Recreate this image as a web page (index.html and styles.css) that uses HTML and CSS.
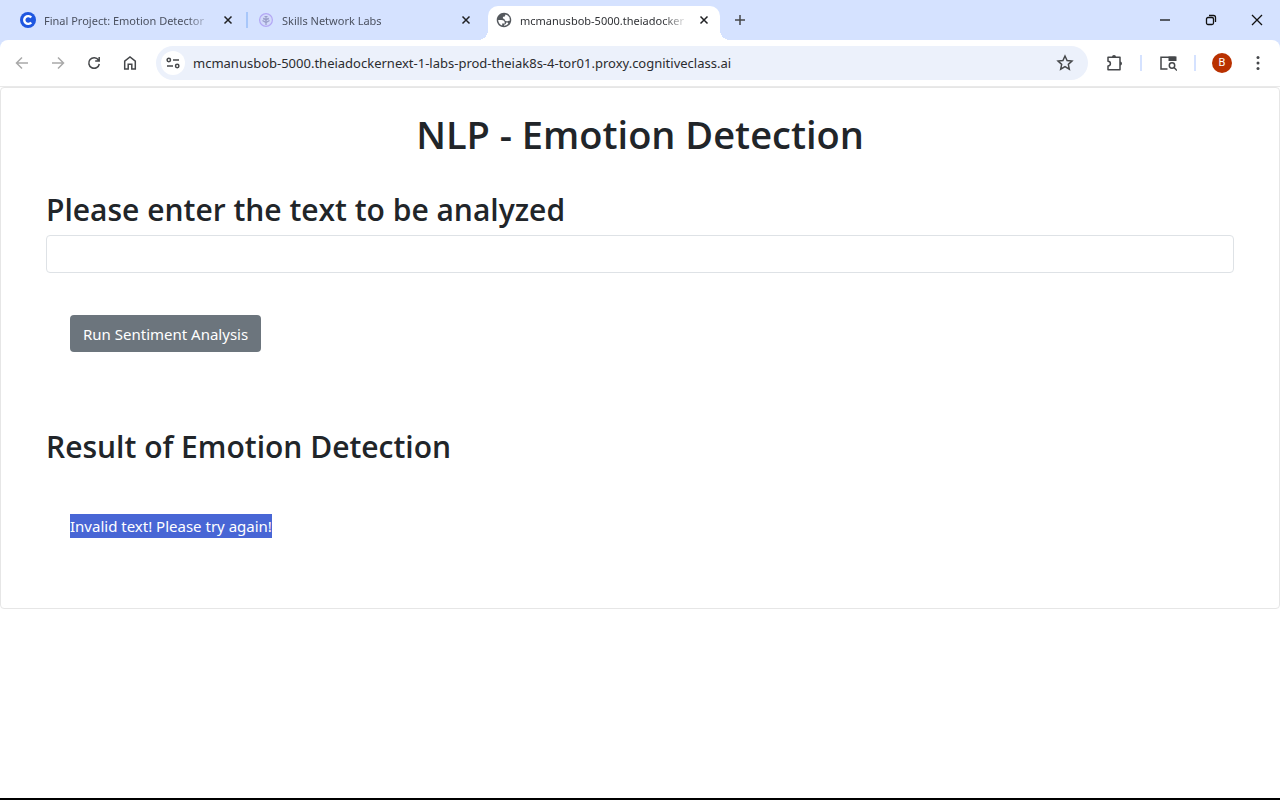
FILE: index.html
```html
<!DOCTYPE html>
<html lang="en">
<head>
<meta charset="utf-8">
<title>NLP - Emotion Detection</title>
<link rel="stylesheet" href="styles.css">
</head>
<body>
<div class="window">
  <header class="chrome">
    <div class="tabstrip">
      <div class="tab">
        <svg class="favicon" viewBox="0 0 16 16" aria-hidden="true"><circle cx="8" cy="8" r="8" fill="#1f57e0"/><path d="M11.2 5.6A3.9 3.9 0 1 0 11.2 10.4" fill="none" stroke="#fff" stroke-width="2.4"/></svg>
        <span class="tab-title">Final Project: Emotion Detector</span>
        <button class="tab-close" aria-label="Close tab"><svg viewBox="0 0 10 10"><path d="M1.5 1.5l7 7M8.5 1.5l-7 7"/></svg></button>
      </div>
      <div class="tab">
        <svg class="favicon" viewBox="0 0 16 16" aria-hidden="true"><circle cx="8" cy="8" r="6.4" fill="#d3dafb" stroke="#b3a8f5" stroke-width="1.2"/><path d="M8 4v9M5.500 6L8 8.500 10.500 6M4.500 8.500L8 10.500l3.500-2M6.500 4.500h3M5 7h6" fill="none" stroke="#989dc8" stroke-width="1.2"/></svg>
        <span class="tab-title">Skills Network Labs</span>
        <button class="tab-close" aria-label="Close tab"><svg viewBox="0 0 10 10"><path d="M1.5 1.5l7 7M8.5 1.5l-7 7"/></svg></button>
      </div>
      <div class="tab tab-active">
        <svg class="favicon" viewBox="1 1 22 22" aria-hidden="true"><path fill="#55595e" d="M12 2C6.480 2 2 6.480 2 12s4.480 10 10 10 10-4.480 10-10S17.520 2 12 2zM4 12h4.400c3.400 0 4.900 1.600 4.600 4.900H9.500v2.600C6.300 18.500 4 15.500 4 12zm8 8v-1.500c2-.3 3-1.300 3-3h1.200c1 0 1.500.5 1.700 1.700A8 8 0 0 1 12 20zm7.900-7h-1.500c-1 .9-3.600 1.300-5.400-.8-.2-1.700-.7-2-2.500-2.200V7.500h1c1.500 0 2-1 2.500-3.200A8 8 0 0 1 19.900 13z"/></svg>
        <span class="tab-title">mcmanusbob-5000.theiadocker</span>
        <button class="tab-close" aria-label="Close tab"><svg viewBox="0 0 10 10"><path d="M1.5 1.5l7 7M8.5 1.5l-7 7"/></svg></button>
      </div>
      <button class="new-tab" aria-label="New tab"><svg viewBox="0 0 12 12"><path d="M6 1v10M1 6h10"/></svg></button>
      <div class="window-controls">
        <button aria-label="Minimize"><svg viewBox="0 0 12 12"><path d="M1 6h10"/></svg></button>
        <button aria-label="Restore"><svg viewBox="0 0 12 12"><rect x="1.500" y="3.500" width="7" height="7" rx="1.500"/><path d="M4 1.500h4.500a2 2 0 0 1 2 2V8"/></svg></button>
        <button aria-label="Close"><svg viewBox="0 0 12 12"><path d="M1 1l10 10M11 1L1 11"/></svg></button>
      </div>
    </div>
    <div class="toolbar">
      <button class="tool disabled" aria-label="Back"><svg viewBox="0 0 16 16"><path d="M14 8H2.500M8 2.500L2.500 8 8 13.500"/></svg></button>
      <button class="tool disabled" aria-label="Forward"><svg viewBox="0 0 16 16"><path d="M2 8h11.500M8 2.500L13.500 8 8 13.500"/></svg></button>
      <button class="tool" aria-label="Reload"><svg viewBox="0 0 16 16"><path d="M12.500 5A5.300 5.300 0 1 0 13.300 9M13.200 2v4H9.200"/></svg></button>
      <button class="tool" aria-label="Home"><svg viewBox="0 0 16 16"><path d="M2.700 6.200L8 2l5.300 4.200V14H9.800V9.300H6.200V14H2.700z"/></svg></button>
      <div class="omnibox">
        <button class="site-info" aria-label="View site information"><svg viewBox="0 0 16 16"><circle cx="3.800" cy="5" r="1.700"/><path d="M8 5h6M2 11h6"/><circle cx="12.200" cy="11" r="1.700"/></svg></button>
        <input class="address" type="text" aria-label="Address" value="mcmanusbob-5000.theiadockernext-1-labs-prod-theiak8s-4-tor01.proxy.cognitiveclass.ai">
        <button class="star" aria-label="Bookmark this tab"><svg viewBox="0 0 16 16"><path d="M8 1.800l1.850 4 4.350.45-3.250 2.950.9 4.300L8 11.300l-3.850 2.200.9-4.300L1.800 6.250l4.350-.45z"/></svg></button>
      </div>
      <button class="tool" aria-label="Extensions"><svg class="wide" viewBox="0 0 18 18"><path d="M3 3.200H15V15.800H3V12a2.300 2.300 0 0 0 0-4.800z" stroke-linejoin="round"/><path d="M7 3a2 2 0 0 1 4 0zM15 7.500a2 2 0 0 1 0 4z" fill="#45474a" stroke="none"/></svg></button>
      <span class="separator"></span>
      <button class="tool" aria-label="Search side panel"><svg class="wide" viewBox="0 0 18 18"><path d="M8.500 15H2V3.300h14.500"/><path d="M9.500 2.500H17.500V7H9.500z" fill="#45474a" stroke="none"/><circle cx="13" cy="11.500" r="2.700"/><path d="M15 13.500l3 3"/></svg></button>
      <span class="separator"></span>
      <button class="tool" aria-label="Profile"><span class="avatar">B</span></button>
      <button class="tool" aria-label="Menu"><svg viewBox="0 0 16 16"><g fill="#45474a" stroke="none"><circle cx="8" cy="2.500" r="1.500"/><circle cx="8" cy="8" r="1.500"/><circle cx="8" cy="13.500" r="1.500"/></g></svg></button>
    </div>
  </header>
  <main class="page">
    <section class="card">
      <h1>NLP - Emotion Detection</h1>
      <div class="group">
        <h2><label for="textToAnalyze">Please enter the text to be analyzed</label></h2>
        <input class="field" id="textToAnalyze" type="text">
      </div>
      <div class="action"><button class="run">Run Sentiment Analysis</button></div>
      <h2>Result of Emotion Detection</h2>
      <div class="result"><span class="selected">Invalid text! Please try again!</span></div>
    </section>
  </main>
</div>
</body>
</html>
```

FILE: styles.css
```css
* { box-sizing: border-box; }
body {
  margin: 0;
  background: #fff;
  color: #212529;
  font-family: "Noto Sans", "Open Sans", sans-serif;
  font-size: 15px;
}
button, input { font: inherit; color: inherit; margin: 0; }
button {
  display: flex;
  align-items: center;
  justify-content: center;
  padding: 0;
  border: 0;
  background: none;
}
svg { display: block; fill: none; stroke: #45474a; stroke-width: 1.5; flex: none; }
.window { display: flex; flex-direction: column; min-height: 100vh; border-bottom: 2px solid #000; }
.chrome { background: #d5e2ff; }

.tabstrip { display: flex; height: 40px; padding: 6px 0 0 12px; gap: 6px; }
.tab {
  position: relative;
  display: flex;
  align-items: center;
  gap: 8px;
  flex: 0 1 232px;
  min-width: 0;
  padding: 0 8px 6px;
}
.tab:first-child::after {
  content: "";
  position: absolute;
  right: -4px;
  top: 6px;
  width: 2px;
  height: 16px;
  background: #a8c7fa;
}
.tab-active { background: #fff; border-radius: 10px 10px 0 0; }
.tab-active::before, .tab-active::after {
  content: "";
  position: absolute;
  bottom: 0;
  width: 10px;
  height: 10px;
}
.tab-active::before { left: -10px; background: radial-gradient(circle at 0 0, transparent 10px, #fff 10px); }
.tab-active::after { right: -10px; background: radial-gradient(circle at 100% 0, transparent 10px, #fff 10px); }
.favicon { width: 16px; height: 16px; stroke: none; }
.tab-title {
  flex: 1;
  min-width: 0;
  overflow: hidden;
  white-space: nowrap;
  font-size: 11px;
  line-height: 20px;
  padding-top: 2px;
  color: #4b5160;
  mask-image: linear-gradient(to right, #000 85%, transparent);
}
.tab-active .tab-title { color: #303236; }
.tab-close { width: 16px; height: 16px; }
.tab-close svg { width: 10px; height: 10px; stroke: #202124; }
.new-tab { width: 28px; height: 28px; }
.new-tab svg { width: 12px; height: 12px; }
.window-controls { display: flex; margin-left: auto; }
.window-controls button { width: 46px; height: 28px; }
.window-controls svg { width: 12px; height: 12px; stroke: #111; stroke-width: 1.3; }

.toolbar {
  display: flex;
  align-items: center;
  height: 47px;
  padding: 0 4px;
  background: #fff;
  border-bottom: 1px solid #e9e9e9;
  border-radius: 8px 8px 0 0;
}
.tool { width: 36px; height: 36px; flex: none; }
.tool svg { width: 16px; height: 16px; }
.tool .wide { width: 18px; height: 18px; }
.disabled svg { stroke: #a9a9a9; }
.omnibox {
  display: flex;
  align-items: center;
  flex: 1;
  min-width: 0;
  height: 34px;
  margin: 0 8px;
  padding: 0 5px;
  border-radius: 17px;
  background: #ecf1fb;
}
.site-info { width: 24px; height: 24px; border-radius: 50%; background: #fff; flex: none; }
.site-info svg { width: 16px; height: 16px; }
.address {
  flex: 1;
  min-width: 0;
  padding: 0 8px;
  border: 0;
  background: none;
  outline: 0;
  font-size: 13px;
  color: #2b2c2f;
}
.star { width: 36px; height: 24px; flex: none; }
.star svg { width: 18px; height: 18px; stroke-width: 1.3; }
.separator { width: 2px; height: 16px; margin: 0 8px; background: #d5e2ff; }
.avatar {
  width: 20px;
  height: 20px;
  border-radius: 50%;
  background: #b93100;
  color: #fff;
  font-family: Roboto, sans-serif;
  font-size: 11px;
  line-height: 20px;
  text-align: center;
}

.page { flex: 1; }
.card { padding: 18px 45px 58px; border: 1px solid #e6e6e6; border-radius: 4px; }
h1, h2 { margin: 0; font-family: "Open Sans", "Noto Sans", sans-serif; font-weight: 600; }
h1 { font-size: 38px; line-height: 56px; text-align: center; }
h2 { font-size: 30px; line-height: 42px; }
.group { margin-top: 27px; }
.field {
  display: block;
  width: 100%;
  height: 38px;
  margin-top: 4px;
  padding: 6px 12px;
  border: 1px solid #dee2e6;
  border-radius: 4px;
}
.action { padding: 42px 24px 74px; }
.run { height: 37px; padding: 0 13px; border-radius: 4px; background: #6c757d; color: #fff; }
.result { padding: 46px 24px 12px; line-height: 24px; }
.selected { display: inline-block; background: #4866d5; color: #fff; }
```
